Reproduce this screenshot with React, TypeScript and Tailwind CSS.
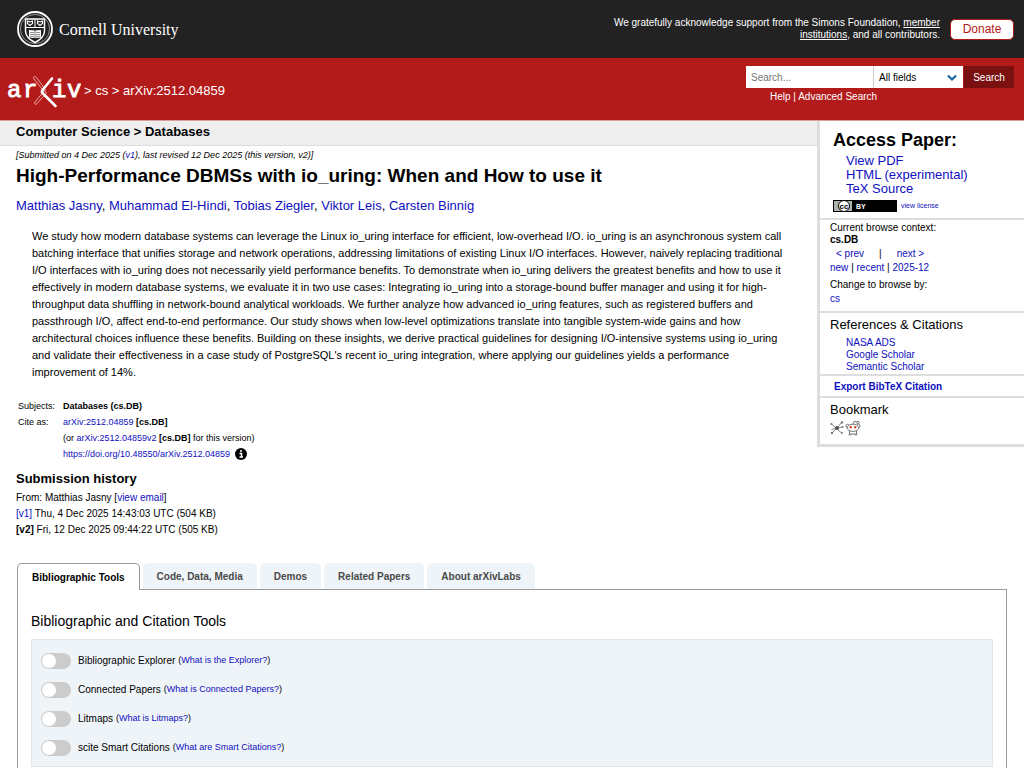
import React, { useState } from 'react';

const LINK = 'text-[#0f0fc0] hover:underline';

const authors = ['Matthias Jasny', 'Muhammad El-Hindi', 'Tobias Ziegler', 'Viktor Leis', 'Carsten Binnig'];

const tabs = ['Bibliographic Tools', 'Code, Data, Media', 'Demos', 'Related Papers', 'About arXivLabs'];

const tools = [
    { id: 'explorer', name: 'Bibliographic Explorer', help: 'What is the Explorer?' },
    { id: 'connected', name: 'Connected Papers', help: 'What is Connected Papers?' },
    { id: 'litmaps', name: 'Litmaps', help: 'What is Litmaps?' },
    { id: 'scite', name: 'scite Smart Citations', help: 'What are Smart Citations?' },
];

const CornellSeal = () => (
    <svg width="36" height="36" viewBox="0 0 36 36" fill="none" stroke="white" aria-hidden="true">
        <circle cx="18" cy="18" r="17" strokeWidth="1.8" />
        <circle cx="18" cy="18" r="14.6" strokeWidth="0.5" />
        <path d="M8.5 8h19v12c0 5-4.5 9-9.5 11.500-5-2.500-9.500-6.500-9.500-11.500z" strokeWidth="1.4" />
        <path d="M8.500 16.500h19M18 8v8.500" strokeWidth="1" />
        <path d="M10.500 10v2.500l2.500 2 2.500-2V10l-2.500 1zM20.500 10v2.500l2.500 2 2.500-2V10L23 11z" strokeWidth="1.100" />
        <path d="M12 19l5.700 0.500v7.500L12 26.500zM18.300 19.500L24 19v7.500l-5.700 0.500z" fill="white" stroke="none" />
        <path d="M13 21.500h4M13 23.500h4M13 25.300h4M19 21.500h4M19 23.500h4M19 25.300h4" stroke="#222" strokeWidth="0.500" />
    </svg>
);

const ArxivLogo = () => (
    <svg width="74" height="36" viewBox="0 0 74 36" role="img" aria-label="arXiv">
        <g fill="white" stroke="white" strokeWidth="0.9" fontSize="24" fontFamily="'Liberation Mono', monospace">
            <text x="0" y="24">a</text>
            <text x="16" y="24">r</text>
            <text x="45" y="24">i</text>
            <text x="60" y="24">v</text>
        </g>
        <path d="M28 3.500c-1.500 0-2 1.500-1 2.500L37 18.500l1.500-1.800L29.500 4.500z" fill="#b31b1b" stroke="#f0b5b5" strokeWidth="0.900" />
        <path d="M37.500 17.500L28 29c-1 1.500 0 2.500 1 2.500L39.500 20z" fill="#b31b1b" stroke="#f0b5b5" strokeWidth="0.900" />
        <path d="M45 5.500L35.500 17c-1 1.200-1 1.800 0 3L48.500 33" fill="none" stroke="white" strokeWidth="2.600" strokeLinecap="round" />
    </svg>
);

const LicenseBadge = () => (
    <svg width="64" height="12" viewBox="0 0 64 12" role="img" aria-label="CC BY license">
        <rect x="0.500" y="0.500" width="63" height="11" fill="#aab2ab" stroke="black" />
        <rect x="19" y="1" width="44" height="10" fill="black" />
        <circle cx="11" cy="6" r="5.500" fill="white" stroke="black" />
        <text x="6.500" y="8.500" fontSize="8" fontWeight="bold" fontFamily="'Liberation Sans', sans-serif">cc</text>
        <text x="23" y="8.500" fontSize="7" fontWeight="bold" fill="white" fontFamily="'Liberation Sans', sans-serif">BY</text>
    </svg>
);

const BibsonomyIcon = () => (
    <svg width="14" height="16" viewBox="0 0 14 16" fill="none" stroke="#888" aria-hidden="true">
        <path d="M1.500 4l10 9M2 13l5-5 5-6M1.500 9.500l5.500-1.500 5.500-1" />
        <g fill="#777" stroke="none">
            <circle cx="1.500" cy="4" r="1" />
            <circle cx="12" cy="2.500" r="1.200" />
            <circle cx="12" cy="13" r="1" />
            <circle cx="2" cy="13" r="1.200" />
            <circle cx="7" cy="8" r="2" fill="#555" />
            <circle cx="12.500" cy="7" r="1" />
        </g>
    </svg>
);

const RedditIcon = () => (
    <svg width="16" height="16" viewBox="0 0 16 16" fill="none" stroke="#777" aria-hidden="true">
        <path d="M8 4.500l1-3 3 .5" />
        <circle cx="13" cy="2.500" r="1.200" />
        <circle cx="2.500" cy="6" r="1.600" />
        <circle cx="13.500" cy="6" r="1.600" />
        <path d="M4.500 10.500V14h7v-3.500M3.500 14.800h3M9.500 14.800h3" />
        <ellipse cx="8" cy="7.800" rx="5.800" ry="3.600" fill="white" />
        <circle cx="5.800" cy="7.200" r="1.200" fill="#d8452e" stroke="none" />
        <circle cx="10.200" cy="7.200" r="1.200" fill="#d8452e" stroke="none" />
    </svg>
);

const Header = () => (
    <header className="text-white">
        <div className="flex h-[58px] items-center bg-[#222] pl-[17px] pr-[10px]">
            <a href="#cornell" className="flex items-center gap-[6px] font-['Liberation_Serif',serif] text-[16px]">
                <CornellSeal />
                <span className="pt-[2px]">Cornell University</span>
            </a>
            <p className="ml-auto w-[330px] text-right text-[10px] leading-[12px]">
                We gratefully acknowledge support from the Simons Foundation,{' '}
                <a href="#members" className="underline">member institutions</a>, and all contributors.
            </p>
            <button className="ml-[10px] h-[21px] w-16 rounded-[5px] border border-[#b31b1b] bg-white text-[12px] leading-none text-[#b31b1b]">
                Donate
            </button>
        </div>
        <div className="flex h-[63px] items-start justify-between border-b border-[#d6a0a0] bg-[#b31b1b] pl-[7px] pr-[10px]">
            <div className="flex items-center gap-[3px] pt-[15px] text-[13px]">
                <a href="#home"><ArxivLogo /></a>
                <span>&gt; <a href="#cs">cs</a> &gt; arXiv:2512.04859</span>
            </div>
            <form className="pt-2" onSubmit={(e) => e.preventDefault()}>
                <div className="flex h-[22px] text-[10px]">
                    <input
                        type="text"
                        aria-label="Search term"
                        placeholder="Search..."
                        className="w-[127px] bg-white px-[5px] text-black placeholder:text-[#757575]"
                    />
                    <div className="relative border-l border-[#ccc]">
                        <select aria-label="Field to search" className="h-full w-[89px] appearance-none bg-white pl-[5px] text-black">
                            <option>All fields</option>
                        </select>
                        <svg className="pointer-events-none absolute right-[6px] top-[8px]" width="10" height="8" viewBox="0 0 10 8">
                            <path d="M1 1.500l4 4 4-4" fill="none" stroke="#1565a5" strokeWidth="2.200" />
                        </svg>
                    </div>
                    <button className="ml-px w-[50px] bg-[#7a1010]">Search</button>
                </div>
                <p className="pl-6 pt-[3px] text-[10px] leading-[12px]">
                    <a href="#help">Help</a> | <a href="#advanced">Advanced Search</a>
                </p>
            </form>
        </div>
    </header>
);

const Sidebar = () => (
    <aside className="w-[207px] shrink-0 border-b-[3px] border-l-[3px] border-[#ddd] text-[10px] leading-[12px]">
        <section className="h-[99px] border-b-2 border-[#ddd] pl-[13px] pt-2">
            <h2 className="text-[18px] font-bold leading-[22px]">Access Paper:</h2>
            <ul className="pl-[13px] pt-[3px] text-[13px] leading-[14px]">
                <li><a href="#pdf" className={LINK}>View PDF</a></li>
                <li><a href="#html" className={LINK}>HTML (experimental)</a></li>
                <li><a href="#tex" className={LINK}>TeX Source</a></li>
            </ul>
            <a href="#license" className={`flex items-center gap-1 pt-1 text-[7px] ${LINK}`}>
                <LicenseBadge />
                view license
            </a>
        </section>
        <section className="h-[93px] border-b-2 border-[#ddd] pl-[10px] pt-[2px]">
            <p>Current browse context:</p>
            <p className="font-bold">cs.DB</p>
            <p className="flex gap-[15px] pl-[6px] pt-[2px]">
                <a href="#prev" className={LINK}>&lt; prev</a>
                <span>|</span>
                <a href="#next" className={LINK}>next &gt;</a>
            </p>
            <p className="pt-[2px]">
                <a href="#new" className={LINK}>new</a> | <a href="#recent" className={LINK}>recent</a> | <a href="#month" className={LINK}>2025-12</a>
            </p>
            <p className="pt-[5px]">Change to browse by:</p>
            <p className="pt-[2px]"><a href="#cs" className={LINK}>cs</a></p>
        </section>
        <section className="h-[63px] border-b-2 border-[#ddd] pl-[10px] pt-1">
            <h3 className="text-[13px] leading-[16px]">References &amp; Citations</h3>
            <ul className="pl-4 pt-1">
                <li><a href="#ads" className={LINK}>NASA ADS</a></li>
                <li><a href="#scholar" className={LINK}>Google Scholar</a></li>
                <li><a href="#semantic" className={LINK}>Semantic Scholar</a></li>
            </ul>
        </section>
        <section className="h-[22px] border-b-2 border-[#ddd] pl-[14px] pt-[5px]">
            <button className={`block font-bold ${LINK}`}>Export BibTeX Citation</button>
        </section>
        <section className="h-[46px] pl-[10px] pt-1">
            <h3 className="text-[13px] leading-[16px]">Bookmark</h3>
            <div className="flex gap-px pt-[2px]">
                <a href="#bibsonomy" aria-label="BibSonomy"><BibsonomyIcon /></a>
                <a href="#reddit" aria-label="Reddit"><RedditIcon /></a>
            </div>
        </section>
    </aside>
);

const Article = () => (
    <div className="min-w-0 flex-1">
        <h1 className="h-[25px] border-b border-[#ddd] bg-[#eee] pl-4 text-[13px] font-bold leading-[22px]">
            Computer Science &gt; Databases
        </h1>
        <article className="pl-4 pt-[2px]">
            <p className="text-[9px] italic leading-[14px]">
                [Submitted on 4 Dec 2025 (<a href="#v1" className={LINK}>v1</a>), last revised 12 Dec 2025 (this version, v2)]
            </p>
            <h2 className="pt-[2px] text-[19px] font-bold leading-[24px]">
                High-Performance DBMSs with io_uring: When and How to use it
            </h2>
            <p className="pt-[9px] text-[13px] leading-[18px]">
                {authors.map((author, i) => (
                    <span key={author}>{i > 0 && ', '}<a href="#author" className={LINK}>{author}</a></span>
                ))}
            </p>
            <blockquote className="ml-4 mr-[30px] pt-[13px] text-[11px] leading-[17px]">
                We study how modern database systems can leverage the Linux io_uring interface for efficient, low-overhead
                I/O. io_uring is an asynchronous system call batching interface that unifies storage and network
                operations, addressing limitations of existing Linux I/O interfaces. However, naively replacing
                traditional I/O interfaces with io_uring does not necessarily yield performance benefits. To demonstrate
                when io_uring delivers the greatest benefits and how to use it effectively in modern database systems, we
                evaluate it in two use cases: Integrating io_uring into a storage-bound buffer manager and using it for
                high-throughput data shuffling in network-bound analytical workloads. We further analyze how advanced
                io_uring features, such as registered buffers and passthrough I/O, affect end-to-end performance. Our
                study shows when low-level optimizations translate into tangible system-wide gains and how architectural
                choices influence these benefits. Building on these insights, we derive practical guidelines for designing
                I/O-intensive systems using io_uring and validate their effectiveness in a case study of PostgreSQL's
                recent io_uring integration, where applying our guidelines yields a performance improvement of 14%.
            </blockquote>
            <table className="ml-[2px] mt-[17px] text-[9px] leading-[16px]">
                <tbody>
                    <tr>
                        <th scope="row" className="w-[45px] text-left font-normal">Subjects:</th>
                        <td className="font-bold">Databases (cs.DB)</td>
                    </tr>
                    <tr>
                        <th scope="row" className="text-left font-normal">Cite as:</th>
                        <td><a href="#abs" className={LINK}>arXiv:2512.04859</a> <b>[cs.DB]</b></td>
                    </tr>
                    <tr>
                        <td />
                        <td>(or <a href="#absv2" className={LINK}>arXiv:2512.04859v2</a> <b>[cs.DB]</b> for this version)</td>
                    </tr>
                    <tr>
                        <td />
                        <td>
                            <span className="flex items-center gap-[5px]">
                                <a href="#doi" className={LINK}>https://doi.org/10.48550/arXiv.2512.04859</a>
                                <svg width="12" height="12" viewBox="0 0 12 12" aria-hidden="true">
                                    <circle cx="6" cy="6" r="6" />
                                    <path d="M6 2v2M4.500 5.500H6.500V9M4.500 9h3.500" fill="none" stroke="white" strokeWidth="1.500" />
                                </svg>
                            </span>
                        </td>
                    </tr>
                </tbody>
            </table>
            <h2 className="pt-[8px] text-[13px] font-bold leading-[18px]">Submission history</h2>
            <div className="pt-[2px] text-[10px] leading-[16px]">
                <p>From: Matthias Jasny [<a href="#email" className={LINK}>view email</a>]</p>
                <p><a href="#v1" className={LINK}>[v1]</a> Thu, 4 Dec 2025 14:43:03 UTC (504 KB)</p>
                <p><b>[v2]</b> Fri, 12 Dec 2025 09:44:22 UTC (505 KB)</p>
            </div>
        </article>
    </div>
);

const Labs = () => {
    const [active, setActive] = useState(tabs[0]);

    return (
        <div className="flex flex-1 flex-col px-[17px] pt-[25px]">
            <div role="tablist" className="flex items-end gap-[3px]">
                {tabs.map((tab) => (
                    <button
                        key={tab}
                        role="tab"
                        aria-selected={tab === active}
                        onClick={() => setActive(tab)}
                        className={`rounded-t-[5px] px-[14px] text-[10px] font-bold
                            ${tab === active
                                ? 'z-10 -mb-px h-[27px] border border-b-0 border-[#999] bg-white text-black'
                                : 'h-[26px] bg-[#eff4f8] text-[#4a4a4a]'}`}
                    >
                        {tab}
                    </button>
                ))}
            </div>
            <div role="tabpanel" className="flex-1 border border-b-0 border-[#999] px-[13px] pt-5">
                <h2 className="text-[14px] leading-[22px]">Bibliographic and Citation Tools</h2>
                <div className="mt-[7px] border border-[#dfe6ec] bg-[#eff4f8] pb-1 pl-[9px] pt-[6px]">
                    {tools.map((tool) => (
                        <div key={tool.id} className="flex h-[29px] items-center text-[10px]">
                            <input
                                id={tool.id}
                                type="checkbox"
                                role="switch"
                                className="h-4 w-[30px] shrink-0 appearance-none rounded-full bg-[#ccc] p-px before:block before:size-[14px] before:rounded-full before:bg-white checked:bg-[#1f8b4c] checked:before:ml-[14px]"
                            />
                            <label htmlFor={tool.id} className="pl-[7px] pr-[3px]">{tool.name}</label>
                            <span className="text-[9px]">
                                (<a href="#help" className={LINK}>{tool.help}</a>)
                            </span>
                        </div>
                    ))}
                </div>
            </div>
        </div>
    );
};

export default function App() {
    return (
        <div className="flex min-h-screen flex-col bg-white font-['Liberation_Sans',Arial,sans-serif] text-black">
            <Header />
            <main className="flex flex-1 flex-col">
                <div className="flex items-start">
                    <Article />
                    <Sidebar />
                </div>
                <Labs />
            </main>
        </div>
    );
}
